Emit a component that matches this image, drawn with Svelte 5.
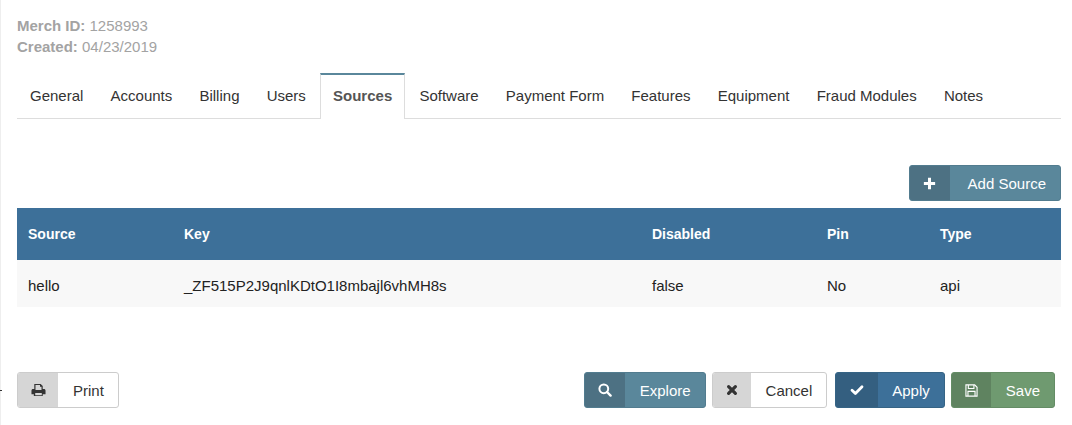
<script lang="ts">
	const tabs = ['General', 'Accounts', 'Billing', 'Users', 'Sources', 'Software', 'Payment Form', 'Features', 'Equipment', 'Fraud Modules', 'Notes'];
	const active = 'Sources';

	const columns = [
		{ label: 'Source', cls: 'c-source' },
		{ label: 'Key', cls: 'c-key' },
		{ label: 'Disabled', cls: 'c-disabled' },
		{ label: 'Pin', cls: 'c-pin' },
		{ label: 'Type', cls: 'c-type' },
	];
	const rows = [['hello', '_ZF515P2J9qnlKDtO1I8mbajl6vhMH8s', 'false', 'No', 'api']];
</script>

{#snippet iconPlus()}
	<svg viewBox="0 0 12 12" width="13" height="13"><path d="M4.6 0.8h2.8v3.8h3.8v2.8H7.4v3.8H4.6V7.4H0.8V4.6h3.8z" fill="currentColor" /></svg>
{/snippet}
{#snippet iconPrint()}
	<svg viewBox="0 0 16 14" width="15" height="14"><path fill="currentColor" fill-rule="evenodd" d="M3.5 0.5h6.8l2.2 2.2v3.3h1.3c1 0 1.7.7 1.7 1.7v3.8h-3v2H3v-2H0.5V7.7C.5 6.7 1.2 6 2.2 6h1.3zM4.8 1.7V7h6.4V3.4H9.6V1.7zM4.5 10.2v2.4h7v-2.4z" /></svg>
{/snippet}
{#snippet iconSearch()}
	<svg viewBox="0 0 14 14" width="14" height="14"><circle cx="5.8" cy="5.8" r="4.4" fill="none" stroke="currentColor" stroke-width="2" /><path d="M9 9l3.6 3.6" stroke="currentColor" stroke-width="2.4" stroke-linecap="round" /></svg>
{/snippet}
{#snippet iconTimes()}
	<svg viewBox="0 0 12 12" width="12" height="12"><path d="M2.6 2.6l6.8 6.8M9.4 2.6l-6.8 6.8" stroke="currentColor" stroke-width="3.2" stroke-linecap="round" /></svg>
{/snippet}
{#snippet iconCheck()}
	<svg viewBox="0 0 14 12" width="14" height="12"><path d="M2 6.2l3.4 3.4L12 2.8" fill="none" stroke="currentColor" stroke-width="2.8" stroke-linecap="round" stroke-linejoin="round" /></svg>
{/snippet}
{#snippet iconSave()}
	<svg viewBox="0 0 14 14" width="13" height="13"><path fill="none" stroke="currentColor" stroke-width="1.2" d="M1 1h9.4L13 3.6V13H1z" /><path fill="none" stroke="currentColor" stroke-width="1.2" d="M3.6 1v3.8h6V1M3.2 13V8h7.6v5" /></svg>
{/snippet}

{#snippet button(label, icon, kind, iconCls = '')}
	<button class="lbl-btn {kind}">
		<span class="btn-icon {iconCls}">{@render icon()}</span>
		<span class="btn-text">{label}</span>
	</button>
{/snippet}

<div class="page">
	<span class="edge-tick"></span>
	<div class="meta">
		<div><strong>Merch ID:</strong> 1258993</div>
		<div><strong>Created:</strong> 04/23/2019</div>
	</div>

	<ul class="tabs">
		{#each tabs as t}
			<li class:active={t === active}>{t}</li>
		{/each}
	</ul>

	<div class="toolbar">
		{@render button('Add Source', iconPlus, 'teal', 'w-add')}
	</div>

	<table>
		<thead>
			<tr>
				{#each columns as c}
					<th class={c.cls}>{c.label}</th>
				{/each}
			</tr>
		</thead>
		<tbody>
			{#each rows as r}
				<tr>
					{#each r as v}
						<td>{v}</td>
					{/each}
				</tr>
			{/each}
		</tbody>
	</table>

	<div class="actions">
		{@render button('Print', iconPrint, 'plain', 'w-41')}
		<div class="actions-right">
			{@render button('Explore', iconSearch, 'teal', 'w-41')}
			{@render button('Cancel', iconTimes, 'plain', 'w-39')}
			{@render button('Apply', iconCheck, 'blue', 'w-43')}
			{@render button('Save', iconSave, 'green', 'w-40')}
		</div>
	</div>
</div>

<style>
	:global(body) {
		background: #fff;
		font-family: 'Liberation Sans', Arial, sans-serif;
	}
	.page {
		position: relative;
		box-sizing: border-box;
		width: 1072px;
		height: 425px;
		padding: 15px 11px 0 16px;
		border-left: 1px solid #eee;
		font-size: 15px;
		color: #333;
	}
	.edge-tick {
		position: absolute;
		left: -1px;
		top: 390px;
		width: 2px;
		height: 1px;
		background: #333;
	}
	.meta {
		color: #a3a3a3;
		font-size: 15px;
		line-height: 21px;
	}
	.tabs {
		display: flex;
		list-style: none;
		margin: 16px 0 0;
		padding: 0;
		height: 45px;
		border-bottom: 1px solid #ddd;
		box-sizing: content-box;
	}
	.tabs li {
		padding: 12px 12px 0;
		margin-right: 1.2px;
		height: 45px;
		box-sizing: border-box;
		border: 1px solid transparent;
		border-bottom: 0;
		line-height: 20px;
	}
	.tabs li.active {
		font-weight: bold;
		color: #555;
		background: #fff;
		border-color: #ddd;
		border-top: 2px solid #5a879b;
		padding-top: 11px;
		height: 46px;
	}
	.toolbar {
		display: flex;
		justify-content: flex-end;
		margin-top: 46px;
	}
	table {
		width: 100%;
		table-layout: fixed;
		border-collapse: collapse;
		margin-top: 7px;
	}
	th {
		box-sizing: border-box;
		height: 52px;
		padding: 0 11px 1px;
		background: #3d7099;
		color: #fff;
		font-size: 14px;
		text-align: left;
	}
	td {
		box-sizing: border-box;
		height: 47px;
		padding: 3px 11px 0;
		background: #f8f8f8;
		color: #222;
	}
	.c-source { width: 156px; }
	.c-key { width: 468px; }
	.c-disabled { width: 175px; }
	.c-pin { width: 113px; }
	.actions {
		display: flex;
		justify-content: space-between;
		margin-top: 65px;
		padding-right: 6px;
	}
	.actions-right {
		display: flex;
		gap: 6px;
	}
	.actions-right > :global(.blue) {
		margin-left: 2px;
	}
	.lbl-btn {
		display: flex;
		align-items: stretch;
		height: 36px;
		padding: 0;
		border: 1px solid transparent;
		border-radius: 3px;
		font: inherit;
		overflow: hidden;
		box-sizing: border-box;
	}
	.btn-icon {
		display: flex;
		align-items: center;
		justify-content: center;
		box-sizing: border-box;
	}
	.w-add { width: 40px; }
	.w-39 { width: 38px; }
	.w-40 { width: 39px; }
	.w-41 { width: 40px; }
	.w-43 { width: 42px; }
	.btn-text {
		display: flex;
		align-items: center;
		padding: 0 14px 0 15px;
	}
	.blue .btn-text {
		padding: 0 14px;
	}
	.w-add + .btn-text {
		padding-left: 18px;
	}
	.teal {
		background: #5a879b;
		border-color: #527c8f;
		color: #fff;
	}
	.teal .btn-icon { background: #4d7183; }
	.blue {
		background: #3d7099;
		border-color: #366485;
		color: #fff;
	}
	.blue .btn-icon { background: #345f80; }
	.green {
		background: #6f9a70;
		border-color: #648c65;
		color: #fff;
	}
	.green .btn-icon { background: #5f8360; }
	.plain {
		background: #fff;
		border-color: #ccc;
		color: #333;
	}
	.plain .btn-icon { background: #d6d6d6; }
</style>
